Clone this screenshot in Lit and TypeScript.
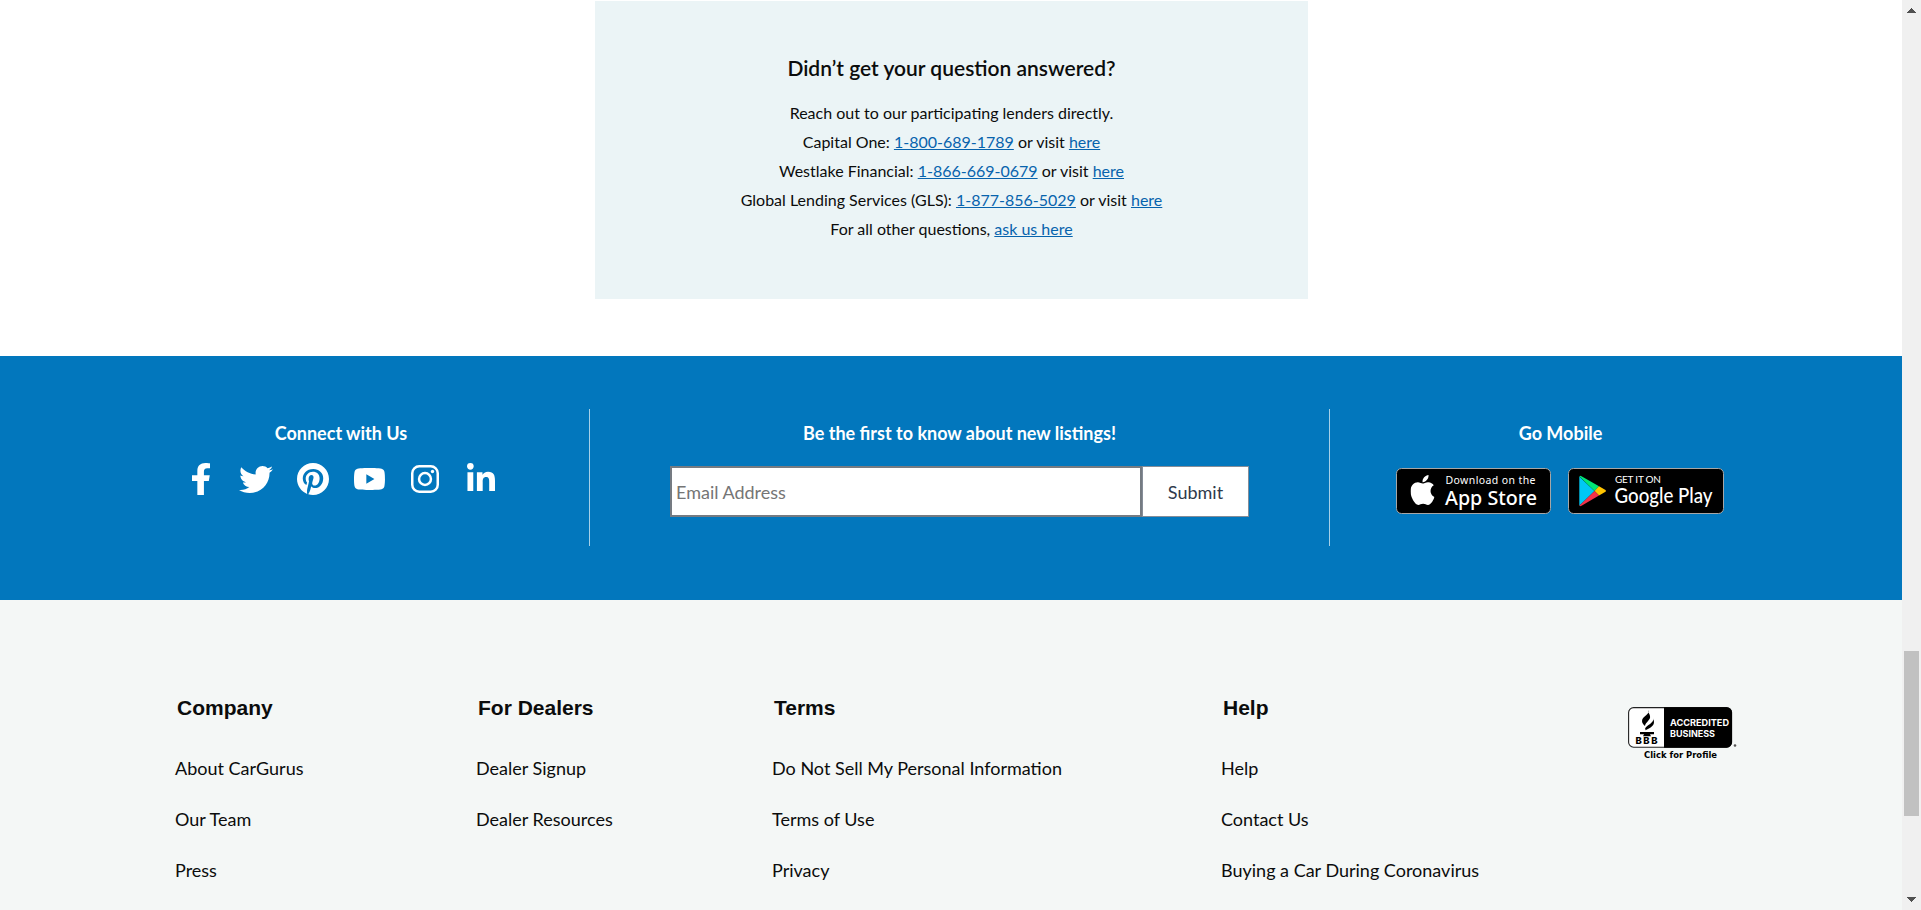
import { LitElement, html, css, svg } from "lit";
import { customElement } from "lit/decorators.js";

interface Social { name: string; cls: string; box: string; d: string }

const SOCIALS: Social[] = [
  { name: "Facebook", cls: "fb", box: "22.89 0 274.22 512", d: "M279.14 288l14.22-92.66h-88.91v-60.13c0-25.35 12.42-50.06 52.24-50.06h40.42V6.26S260.43 0 225.36 0c-73.22 0-121.08 44.38-121.08 124.72v70.62H22.89V288h81.39v224h100.17V288z" },
  { name: "Twitter", cls: "tw", box: "0 48 512 416", d: "M459.37 151.716c.325 4.548.325 9.097.325 13.645 0 138.72-105.583 298.558-298.558 298.558-59.452 0-114.68-17.219-161.137-47.106 8.447.974 16.568 1.299 25.34 1.299 49.055 0 94.213-16.568 130.274-44.832-46.132-.975-84.792-31.188-98.112-72.772 6.498.974 12.995 1.624 19.818 1.624 9.421 0 18.843-1.3 27.614-3.573-48.081-9.747-84.143-51.98-84.143-102.985v-1.299c13.969 7.797 30.214 12.67 47.431 13.319-28.264-18.843-46.781-51.005-46.781-87.391 0-19.492 5.197-37.36 14.294-52.954 51.655 63.675 129.3 105.258 216.365 109.807-1.624-7.797-2.599-15.918-2.599-24.04 0-57.828 46.782-104.934 104.934-104.934 30.213 0 57.502 12.67 76.67 33.137 23.715-4.548 46.456-13.32 66.599-25.34-7.798 24.366-24.366 44.833-46.132 57.827 21.117-2.273 41.584-8.122 60.426-16.243-14.292 20.791-32.161 39.308-52.628 54.253z" },
  { name: "Pinterest", cls: "pi", box: "0 8 496 496", d: "M496 256c0 137-111 248-248 248-25.6 0-50.2-3.9-73.4-11.1 10.1-16.5 25.2-43.5 30.8-65 3-11.6 15.4-59 15.4-59 8.1 15.4 31.7 28.5 56.8 28.5 74.8 0 128.7-68.8 128.7-154.3 0-81.9-66.9-143.2-152.9-143.2-107 0-163.9 71.8-163.9 150.1 0 36.4 19.4 81.7 50.3 96.1 4.7 2.2 7.2 1.2 8.3-3.3.8-3.4 5-20.3 6.9-28.1.6-2.5.3-4.7-1.7-7.1-10.1-12.5-18.3-35.3-18.3-56.6 0-54.7 41.4-107.6 112-107.6 60.9 0 103.6 41.5 103.6 100.9 0 67.1-33.9 113.6-78 113.6-24.3 0-42.6-20.1-36.7-44.8 7-29.5 20.5-61.3 20.5-82.6 0-19-10.2-34.9-31.4-34.9-24.9 0-44.9 25.7-44.9 60.2 0 22 7.4 36.8 7.4 36.8s-24.5 103.8-29 123.2c-5 21.4-3 51.6-.9 71.2C65.4 450.9 0 361.1 0 256 0 119 111 8 248 8s248 111 248 248z" },
  { name: "YouTube", cls: "yt", box: "14.9 64 546.2 384", d: "M549.655 124.083c-6.281-23.65-24.787-42.276-48.284-48.597C458.781 64 288 64 288 64S117.22 64 74.629 75.486c-23.497 6.322-42.003 24.947-48.284 48.597-11.412 42.867-11.412 132.305-11.412 132.305s0 89.438 11.412 132.305c6.281 23.65 24.787 41.5 48.284 47.821C117.22 448 288 448 288 448s170.78 0 213.371-11.486c23.497-6.321 42.003-24.171 48.284-47.821 11.412-42.867 11.412-132.305 11.412-132.305s0-89.438-11.412-132.305zm-317.51 213.508V175.185l142.739 81.205-142.739 81.201z" },
  { name: "Instagram", cls: "ig", box: "0 0 28 28", d: "" },
  { name: "LinkedIn", cls: "li", box: "0 0 448 448", d: "M100.28 448H7.4V148.9h92.88zM53.79 108.1C24.09 108.1 0 83.5 0 53.8a53.79 53.79 0 0 1 107.58 0c0 29.7-24.1 54.3-53.79 54.3zM447.9 448h-92.68V302.4c0-34.7-.7-79.2-48.29-79.2-48.29 0-55.69 37.7-55.69 76.7V448h-92.78V148.9h89.08v40.8h1.3c12.4-23.5 42.69-48.3 87.88-48.3 94 0 111.28 61.9 111.28 142.3V448z" },
];

const LENDERS = [
  ["Capital One:", "1-800-689-1789"],
  ["Westlake Financial:", "1-866-669-0679"],
  ["Global Lending Services (GLS):", "1-877-856-5029"],
];

const COLUMNS = [
  { title: "Company", cls: "c1", links: ["About CarGurus", "Our Team", "Press"] },
  { title: "For Dealers", cls: "c2", links: ["Dealer Signup", "Dealer Resources"] },
  { title: "Terms", cls: "c3", links: ["Do Not Sell My Personal Information", "Terms of Use", "Privacy"] },
  { title: "Help", cls: "c4", links: ["Help", "Contact Us", "Buying a Car During Coronavirus"] },
];

@customElement("app-root")
export class AppRoot extends LitElement {
  static styles = css`
    :host { display: flex; height: 910px; overflow: hidden; background: #fff; color: #0b0c0c; font-family: Lato, "Liberation Sans", sans-serif; }
    * { box-sizing: border-box; margin: 0; padding: 0; }
    svg { display: block; }
    a { color: inherit; text-decoration: none; }
    .page { flex: 1; min-width: 0; display: flex; flex-direction: column; }
    .card { width: 713px; height: 298px; margin: 1px 0 57px 595px; padding-top: 51px; background: #ebf4f6; text-align: center; font-size: 16px; line-height: 29px; flex: none; }
    .card h2 { font-size: 21px; line-height: 32px; font-weight: 600; margin-bottom: 14px; }
    .card a { color: #0763ad; text-decoration: underline; }
    .band { height: 244px; flex: none; background: #0277bd; display: flex; align-items: flex-start; padding: 53px 0 0 93px; color: #fff; }
    .band h3 { font-size: 18px; line-height: 24px; font-weight: 700; text-align: center; }
    .cell { height: 137px; padding-top: 12px; flex: none; }
    .connect { width: 497px; border-right: 1px solid #a6d0e8; }
    .news { width: 740px; border-right: 1px solid #a6d0e8; }
    .mobile { width: 461px; }
    .socials { display: flex; align-items: center; height: 36px; margin-top: 28px; padding-left: 99px; margin-top: 16px; }
    .fb { width: 18px; height: 32px; }
    .tw { width: 34px; height: 27px; margin-left: 29px; }
    .pi { width: 32px; height: 32px; margin-left: 24px; }
    .yt { width: 31px; height: 22px; margin-left: 25px; }
    .ig { width: 28px; height: 28px; margin-left: 26px; }
    .li { width: 28px; height: 28px; margin-left: 28px; margin-top: -4px; }
    .form { display: flex; margin: 21px 0 0 80px; height: 51px; }
    .email { width: 472px; height: 51px; border: 2px solid #757b82; outline: 0; padding: 0 4px; font: 18px Lato, sans-serif; background: #fff; }
    .email::placeholder { color: #757575; opacity: 1; }
    .submit { width: 107px; height: 51px; border: 1px solid #858d98; background: #fff; color: #2f3a4b; font: 18px Lato, sans-serif; text-align: center; }
    .stores { display: flex; gap: 17px; margin: 23px 0 0 66px; }
    .footer { flex: 1; min-height: 0; background: #f4f7f6; display: flex; padding: 93px 0 0 175px; overflow: hidden; }
    .col { flex: none; }
    .c1 { width: 301px; } .c2 { width: 296px; } .c3 { width: 449px; } .c4 { width: 407px; }
    .col h4 { font: 700 21px/30px "Liberation Sans", Arial, sans-serif; padding-left: 2px; margin-bottom: 20px; }
    .col a { display: block; font-size: 18px; line-height: 51px; height: 51px; }
    .bbb { margin-top: 13px; }
    .bar { width: 19px; flex: none; background: #f0f0f0; display: flex; flex-direction: column; align-items: center; padding: 8px 0; }
    .thumb { width: 15px; height: 165px; margin-top: 638px; background: #c1c1c1; }
    .down { margin-top: auto; }
  `;

  private social(s: Social) {
    return html`<a href="#" aria-label=${s.name}><svg class=${s.cls} viewBox=${s.box} preserveAspectRatio="none" fill="#fff">${s.d
      ? svg`<path d=${s.d} />`
      : svg`<rect x="1.25" y="1.25" width="25.5" height="25.5" rx="7" fill="none" stroke="#fff" stroke-width="2.5" /><circle cx="14" cy="14" r="5.95" fill="none" stroke="#fff" stroke-width="2.5" /><circle cx="21.5" cy="6.5" r="1.7" />`}</svg></a>`;
  }

  render() {
    return html`
      <div class="page">
        <section class="card">
          <h2>Didn’t get your question answered?</h2>
          <p>Reach out to our participating lenders directly.</p>
          ${LENDERS.map(([n, p]) => html`<p>${n} <a href="#">${p}</a> or visit <a href="#">here</a></p>`)}
          <p>For all other questions, <a href="#">ask us here</a></p>
        </section>
        <section class="band">
          <div class="cell connect">
            <h3>Connect with Us</h3>
            <div class="socials">${SOCIALS.map((s) => this.social(s))}</div>
          </div>
          <div class="cell news">
            <h3>Be the first to know about new listings!</h3>
            <div class="form"><input class="email" placeholder="Email Address" /><button class="submit">Submit</button></div>
          </div>
          <div class="cell mobile">
            <h3>Go Mobile</h3>
            <div class="stores">
              <svg width="155" height="46" viewBox="0 0 155 46">
                <rect x=".5" y=".5" width="154" height="45" rx="5" fill="#000" stroke="#a6a6a6" />
                <svg x="14.5" y="7" width="24" height="30" viewBox="4 32 376 448" preserveAspectRatio="none"><path fill="#fff" d="M318.7 268.7c-.2-36.7 16.4-64.4 50-84.8-18.8-26.9-47.2-41.7-84.7-44.6-35.5-2.8-74.3 20.7-88.5 20.7-15 0-49.4-19.7-76.4-19.7C63.3 141.2 4 184.8 4 273.5q0 39.3 14.4 81.2c12.8 36.7 59 126.7 107.2 125.2 25.2-.6 43-17.9 75.8-17.9 31.8 0 48.3 17.9 76.4 17.9 48.6-.7 90.4-82.5 102.6-119.3-65.2-30.7-61.7-90-61.7-91.9zm-56.6-164.2c27.3-32.4 24.8-61.9 24-72.5-24.1 1.4-52 16.4-67.9 34.9-17.5 19.8-27.8 44.3-25.6 71.9 26.1 2 49.9-11.4 69.5-34.3z" /></svg>
                <g fill="#fff" font-family="'Noto Sans', sans-serif">
                  <text x="49.5" y="15.5" font-size="10.5" textLength="90">Download on the</text>
                  <text x="49" y="36.5" font-size="20.5" font-weight="500" textLength="92" lengthAdjust="spacingAndGlyphs">App Store</text>
                </g>
              </svg>
              <svg width="156" height="46" viewBox="0 0 156 46">
                <rect x=".5" y=".5" width="155" height="45" rx="5" fill="#000" stroke="#a6a6a6" />
                <path d="M11.3 8.5v29.2L26.5 23z" fill="#00c8f5" />
                <path d="M11.3 8.2Q12 7.4 13.5 8.2L31 18.3 26.5 23z" fill="#00e676" />
                <path d="M31 18.3l6.5 3.7q1 .9 0 1.8L31 27.6 26.5 23z" fill="#ffc400" />
                <path d="M11.3 37.8q.8.8 2.2 0L31 27.6 26.5 23z" fill="#f43249" />
                <g fill="#fff">
                  <text x="47" y="15" font-size="10" font-family="Lato, sans-serif" textLength="46">GET IT ON</text>
                  <text x="46.5" y="35" font-size="20.5" font-family="Lato, sans-serif" font-weight="500" textLength="98" lengthAdjust="spacingAndGlyphs">Google Play</text>
                </g>
              </svg>
            </div>
          </div>
        </section>
        <footer class="footer">
          ${COLUMNS.map((c) => html`<nav class="col ${c.cls}"><h4>${c.title}</h4>${c.links.map((l) => html`<a href="#">${l}</a>`)}</nav>`)}
          <a class="bbb" href="#">
            <svg width="110" height="56" viewBox="0 0 110 56">
              <rect x=".6" y="1.6" width="103" height="39.6" rx="5" fill="#fff" stroke="#222" stroke-width="1.1" />
              <path d="M36 1.2h62.5a5.5 5.5 0 0 1 5.5 5.5v29.5a5.5 5.5 0 0 1-5.5 5.5H36z" fill="#000" />
              <path d="M20 4c3 4-6 6-6 11 0 2.400 1.500 3.500 3 5 .5-4 6-6 5-10-.3-2.600-2-3-2-6zM25 12c2 5-7 7-8 11 2 2 0 2 1 1 4-2 8-4 8-8 0-2-1-3-1-4z" fill="#000" />
              <path d="M12 26h14v2.300h-4l1 2H15l1-2h-4z" fill="#000" />
              <circle cx="107" cy="39.500" r="1.300" fill="#555" />
              <text x="7.500" y="38" font-family="Inter, sans-serif" font-weight="800" font-size="9.500" textLength="22">BBB</text>
              <g fill="#fff" font-family="Inter, sans-serif" font-weight="700" font-size="9">
                <text x="42" y="20" textLength="59" lengthAdjust="spacingAndGlyphs">ACCREDITED</text>
                <text x="42" y="31" textLength="45" lengthAdjust="spacingAndGlyphs">BUSINESS</text>
              </g>
              <text x="16" y="52" font-family="'DejaVu Sans', sans-serif" font-weight="700" font-size="8.500" textLength="73" lengthAdjust="spacingAndGlyphs">Click for Profile</text>
            </svg>
          </a>
        </footer>
      </div>
      <div class="bar">
        <svg width="9" height="5" viewBox="0 0 9 5" shape-rendering="crispEdges"><path d="M4 0h1v1h1v1h1v1h1v1h1v1H0V4h1V3h1V2h1V1h1z" fill="#505050" /></svg>
        <div class="thumb"></div>
        <svg class="down" width="9" height="5" viewBox="0 0 9 5" shape-rendering="crispEdges"><path d="M0 0h9v1H8v1H7v1H6v1H5v1H4V4H3V3H2V2H1V1H0z" fill="#505050" /></svg>
      </div>`;
  }
}
